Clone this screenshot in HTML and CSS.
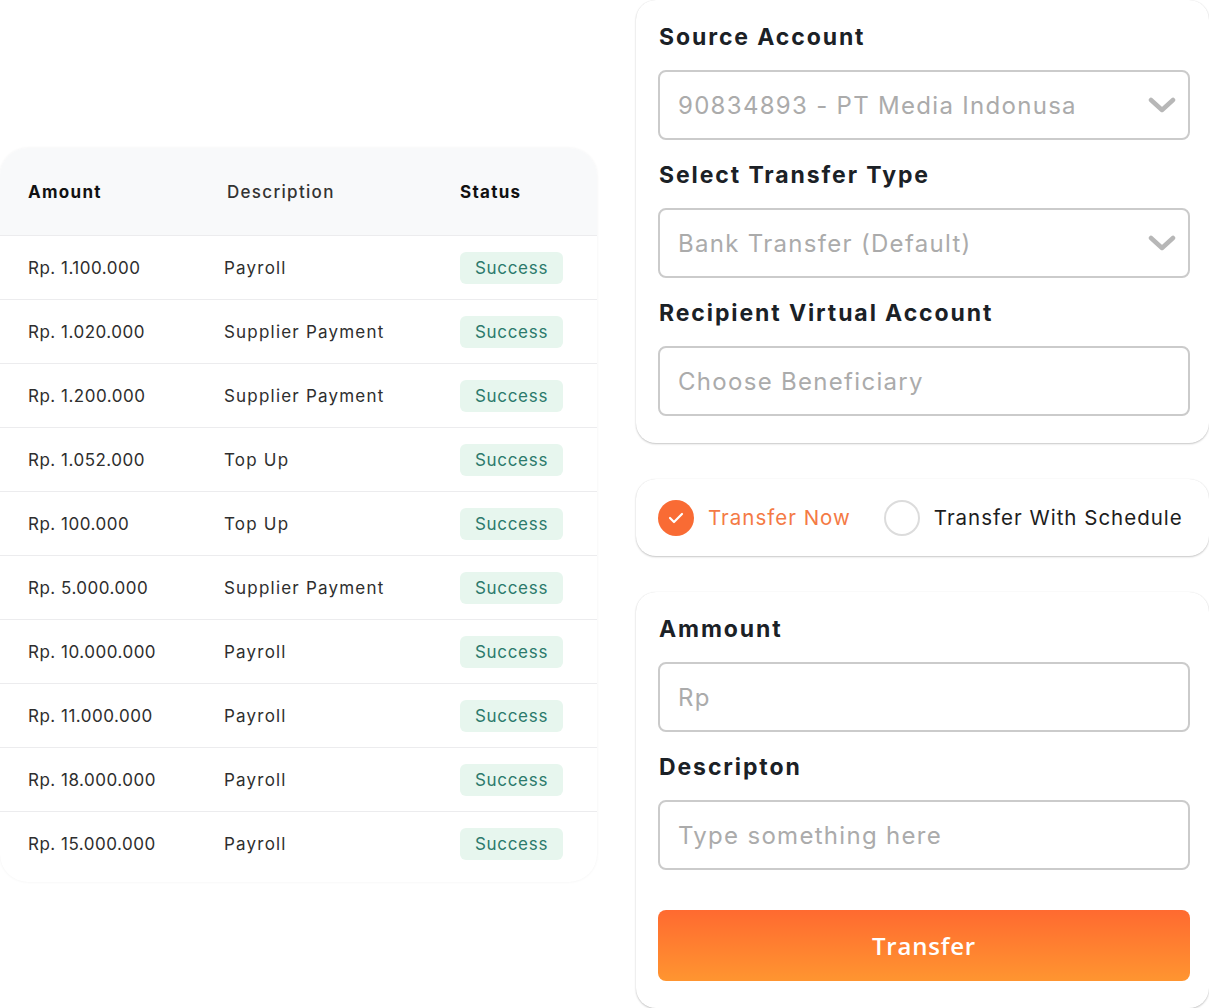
FILE: index.html
```html
<!DOCTYPE html>
<html>
  <head>
    <meta charset="utf-8">
    <title>Transfer</title>
    <link rel="stylesheet" href="styles.css">
  </head>
  <body>
    <div class="page">
      <div class="history">
        <div class="table">
          <div class="row head">
            <div class="cell strong">Amount</div>
            <div class="cell">Description</div>
            <div class="cell strong">Status</div>
          </div>
          <div class="row">
            <div class="cell">Rp. 1.100.000</div>
            <div class="cell">Payroll</div>
            <div class="cell"><span class="badge">Success</span></div>
          </div>
          <div class="row">
            <div class="cell">Rp. 1.020.000</div>
            <div class="cell">Supplier Payment</div>
            <div class="cell"><span class="badge">Success</span></div>
          </div>
          <div class="row">
            <div class="cell">Rp. 1.200.000</div>
            <div class="cell">Supplier Payment</div>
            <div class="cell"><span class="badge">Success</span></div>
          </div>
          <div class="row">
            <div class="cell">Rp. 1.052.000</div>
            <div class="cell">Top Up</div>
            <div class="cell"><span class="badge">Success</span></div>
          </div>
          <div class="row">
            <div class="cell">Rp. 100.000</div>
            <div class="cell">Top Up</div>
            <div class="cell"><span class="badge">Success</span></div>
          </div>
          <div class="row">
            <div class="cell">Rp. 5.000.000</div>
            <div class="cell">Supplier Payment</div>
            <div class="cell"><span class="badge">Success</span></div>
          </div>
          <div class="row">
            <div class="cell">Rp. 10.000.000</div>
            <div class="cell">Payroll</div>
            <div class="cell"><span class="badge">Success</span></div>
          </div>
          <div class="row">
            <div class="cell">Rp. 11.000.000</div>
            <div class="cell">Payroll</div>
            <div class="cell"><span class="badge">Success</span></div>
          </div>
          <div class="row">
            <div class="cell">Rp. 18.000.000</div>
            <div class="cell">Payroll</div>
            <div class="cell"><span class="badge">Success</span></div>
          </div>
          <div class="row">
            <div class="cell">Rp. 15.000.000</div>
            <div class="cell">Payroll</div>
            <div class="cell"><span class="badge">Success</span></div>
          </div>
        </div>
      </div>

      <div class="form">
        <div class="card">
          <div class="label">Source Account</div>
          <div class="input select">
            <span>90834893 - PT Media Indonusa</span>
            <svg class="chevron" width="28" height="16" viewBox="0 0 28 16"><path d="M3 3 L14 13 L25 3" fill="none" stroke="#b7b7b7" stroke-width="4.5" stroke-linecap="round" stroke-linejoin="round"/></svg>
          </div>
          <div class="label">Select Transfer Type</div>
          <div class="input select">
            <span>Bank Transfer (Default)</span>
            <svg class="chevron" width="28" height="16" viewBox="0 0 28 16"><path d="M3 3 L14 13 L25 3" fill="none" stroke="#b7b7b7" stroke-width="4.5" stroke-linecap="round" stroke-linejoin="round"/></svg>
          </div>
          <div class="label">Recipient Virtual Account</div>
          <div class="input">
            <span>Choose Beneficiary</span>
          </div>
        </div>

        <div class="card card-radio">
          <div class="option active">
            <span class="radio checked">
              <svg width="16" height="12" viewBox="0 0 16 12"><path d="M2 6 L6 10 L14 2" fill="none" stroke="#fff" stroke-width="2.2" stroke-linecap="round" stroke-linejoin="round"/></svg>
            </span>
            <span>Transfer Now</span>
          </div>
          <div class="option">
            <span class="radio"></span>
            <span>Transfer With Schedule</span>
          </div>
        </div>

        <div class="card">
          <div class="label">Ammount</div>
          <div class="input"><span>Rp</span></div>
          <div class="label">Descripton</div>
          <div class="input"><span>Type something here</span></div>
          <div class="button">Transfer</div>
        </div>
      </div>
    </div>
  </body>
</html>
```

FILE: styles.css
```css
body {
  margin: 0;
  background: #fff;
  font-family: "Inter", "Open Sans", sans-serif;
  color: #2b2b2b;
}
.page {
  display: flex;
  width: 1209px;
  height: 1008px;
  overflow: hidden;
}

/* left table */
.history {
  width: 597px;
  padding-top: 148px;
  flex: none;
}
.table {
  border-radius: 28px;
  background: #fff;
  box-shadow: 0 0 3px rgba(0, 0, 0, 0.06);
  overflow: hidden;
  padding-bottom: 6px;
}
.row {
  display: grid;
  grid-template-columns: 196px 236px 1fr;
  align-items: center;
  height: 63px;
  padding-left: 28px;
  border-bottom: 1px solid #ececee;
  font-size: 17px;
  color: #2e2e2e;
}
.row .cell:first-child {
  letter-spacing: 0.5px;
}
.row .cell:nth-child(2) {
  letter-spacing: 1.2px;
}
.row:last-child {
  border-bottom: none;
  height: 64px;
}
.row.head {
  height: 87px;
  background: #f8f9fa;
  font-size: 17px;
  font-weight: 500;
  color: #333;
}
.row.head .cell {
  letter-spacing: 1.3px;
}
.row.head .strong {
  font-weight: 700;
  color: #111;
}
.row.head .cell:nth-child(2) {
  padding-left: 3px;
}
.badge {
  display: inline-block;
  width: 103px;
  height: 32px;
  line-height: 32px;
  text-align: center;
  border-radius: 6px;
  background: #e7f6ee;
  color: #2c7a6c;
  font-size: 17px;
  letter-spacing: 0.7px;
}

/* right form */
.form {
  margin-left: 39px;
  width: 573px;
  flex: none;
  display: flex;
  flex-direction: column;
  gap: 36px;
}
.card {
  background: #fff;
  border-radius: 20px;
  box-shadow: 0 1px 2px rgba(0, 0, 0, 0.22), 0 0 1px rgba(0, 0, 0, 0.1);
  padding: 23px 19px 27px 22px;
}
.label {
  height: 28px;
  line-height: 28px;
  font-size: 23px;
  font-weight: 700;
  letter-spacing: 1.9px;
  color: #1b2126;
  margin-bottom: 19px;
  padding-left: 1px;
}
.input {
  height: 66px;
  border: 2px solid #cbcbcb;
  border-radius: 8px;
  display: flex;
  align-items: center;
  justify-content: space-between;
  padding: 0 12px 0 18px;
  margin-bottom: 21px;
  font-size: 24px;
  letter-spacing: 1.3px;
  color: #ababab;
}
.input:last-child {
  margin-bottom: 0;
}
.chevron {
  display: block;
}

.card-radio {
  height: 78px;
  box-sizing: border-box;
  display: flex;
  align-items: center;
  padding: 0 0 0 22px;
  gap: 33px;
}
.option {
  display: flex;
  align-items: center;
  gap: 14px;
  font-size: 20.5px;
  letter-spacing: 1px;
  color: #1d1d1d;
}
.option.active {
  color: #f47a45;
}
.radio {
  width: 32px;
  height: 32px;
  border-radius: 50%;
  border: 2px solid #dcdcdc;
  display: flex;
  align-items: center;
  justify-content: center;
}
.radio.checked {
  width: 36px;
  height: 36px;
  border: none;
  background: #f96b34;
}

.button {
  margin-top: 40px;
  height: 71px;
  border-radius: 8px;
  background: linear-gradient(180deg, #ff6a30 0%, #ff9530 100%);
  color: #fff;
  font-family: "Open Sans", sans-serif;
  font-size: 24px;
  font-weight: 600;
  letter-spacing: 0.8px;
  display: flex;
  align-items: center;
  justify-content: center;
}
```
